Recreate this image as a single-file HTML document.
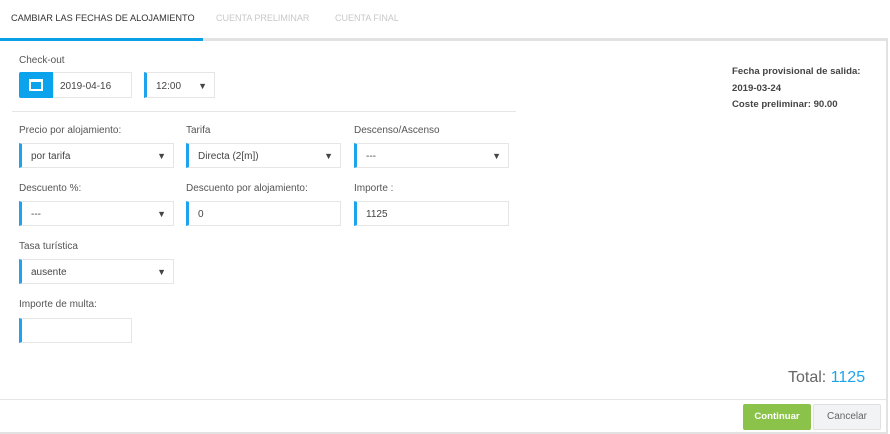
<!DOCTYPE html><html><head><style>
*{box-sizing:border-box;margin:0;padding:0}
body{width:890px;height:434px;background:#fff;font-family:"Liberation Sans",sans-serif;font-size:10px;color:#555;position:relative;overflow:hidden}
.a{position:absolute}
.lbl{position:absolute;font-size:10px;color:#555}
.in{position:absolute;height:25px;border:1px solid #e6e6e6;border-left:3px solid #1ea4ec;padding-left:9px;line-height:25px;font-size:10px;color:#444}
.in.sel::after{content:"▼";position:absolute;right:7px;top:0;font-size:9px;color:#444}
</style></head><body>
<div class="a" style="left:11px;top:13px;font-size:9.2px;color:#333">CAMBIAR LAS FECHAS DE ALOJAMIENTO</div>
<div class="a" style="left:216px;top:13px;font-size:9px;color:#c8c8c8">CUENTA PRELIMINAR</div>
<div class="a" style="left:335px;top:13px;font-size:9px;color:#c8c8c8">CUENTA FINAL</div>
<div class="a" style="left:0;top:38px;width:888px;height:3px;background:#e2e2e2"></div>
<div class="a" style="left:0;top:38px;width:203px;height:3px;background:#0aa0e8"></div>
<div class="a" style="left:886px;top:38px;width:2px;height:396px;background:#e2e2e2"></div>
<div class="a" style="left:0;top:432px;width:888px;height:2px;background:#e2e2e2"></div>
<div class="lbl" style="left:19px;top:55px">Check-out</div>
<div class="a" style="left:19px;top:72px;width:35px;height:26px;background:#0aa3ec;border-radius:2px 0 0 2px"><div class="a" style="left:10px;top:7px;width:14px;height:12px;border:2px solid #fff;border-top-width:3px"></div></div>
<div class="a" style="left:53px;top:72px;width:79px;height:26px;border:1px solid #e6e6e6;padding-left:6px;line-height:27px;color:#444">2019-04-16</div>
<div class="in sel" style="left:144px;top:72px;width:71px;height:26px;line-height:27px">12:00</div>
<div class="a" style="left:12px;top:111px;width:504px;height:1px;background:#e6e6e6"></div>
<div class="lbl" style="left:19px;top:125px">Precio por alojamiento:</div>
<div class="lbl" style="left:186px;top:125px">Tarifa</div>
<div class="lbl" style="left:354px;top:125px">Descenso/Ascenso</div>
<div class="in sel" style="left:19px;top:143px;width:155px">por tarifa</div>
<div class="in sel" style="left:186px;top:143px;width:155px">Directa (2[m])</div>
<div class="in sel" style="left:354px;top:143px;width:155px">---</div>
<div class="lbl" style="left:19px;top:183px">Descuento %:</div>
<div class="lbl" style="left:186px;top:183px">Descuento por alojamiento:</div>
<div class="lbl" style="left:354px;top:183px">Importe :</div>
<div class="in sel" style="left:19px;top:201px;width:155px">---</div>
<div class="in" style="left:186px;top:201px;width:155px">0</div>
<div class="in" style="left:354px;top:201px;width:155px">1125</div>
<div class="lbl" style="left:19px;top:241px">Tasa turística</div>
<div class="in sel" style="left:19px;top:259px;width:155px">ausente</div>
<div class="lbl" style="left:19px;top:299px">Importe de multa:</div>
<div class="in" style="left:19px;top:318px;width:113px"></div>
<div class="a" style="left:732px;top:64px;font-weight:bold;color:#444;line-height:16.5px;font-size:9.6px">Fecha provisional de salida:<br>2019-03-24<br>Coste preliminar: 90.00</div>
<div class="a" style="left:788px;top:369px;font-size:16px;color:#666">Total: <span style="color:#1ea4ec">1125</span></div>
<div class="a" style="left:0;top:399px;width:886px;height:1px;background:#e6e6e6"></div>
<div class="a" style="left:743px;top:404px;width:68px;height:26px;background:#8bc34a;border-radius:2px;color:#fff;font-weight:bold;font-size:9.6px;text-align:center;line-height:26px">Continuar</div>
<div class="a" style="left:813px;top:404px;width:68px;height:26px;background:#f2f3f5;border:1px solid #e0e0e0;border-radius:2px;color:#666;text-align:center;line-height:24px">Cancelar</div>
</body></html>
